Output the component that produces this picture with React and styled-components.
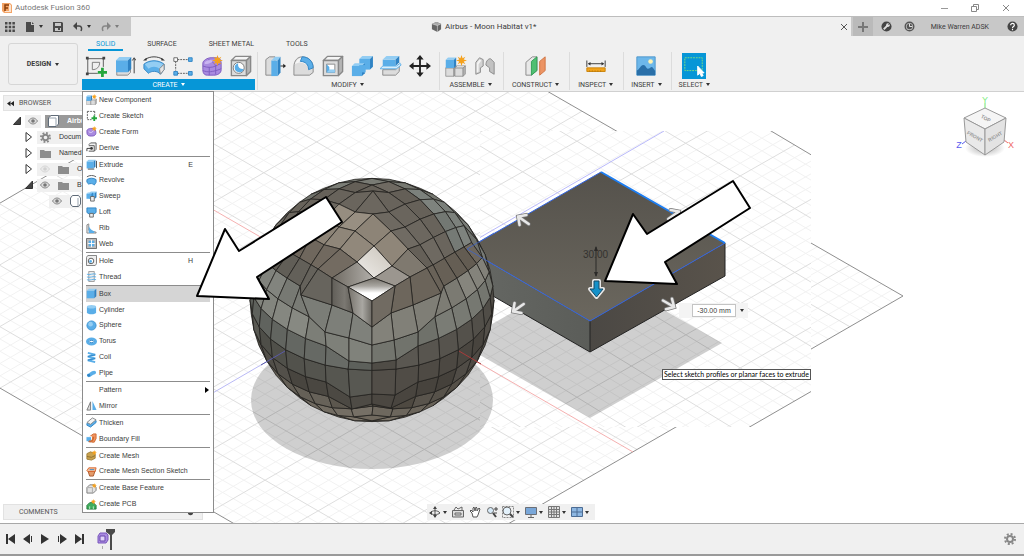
import React from 'react'
import styled, { createGlobalStyle, css } from 'styled-components'

const GlobalStyle = createGlobalStyle`
  * { box-sizing: border-box; }
  body {
    margin: 0;
    background: #fff;
    color: #3c3c3c;
    font: 7px/10px Roboto, sans-serif;
  }
  button, input {
    font: inherit;
    color: inherit;
    margin: 0;
    padding: 0;
    border: 0;
    background: none;
  }
  svg { display: block; flex: none; }
`

/* ---------- shell ---------- */

const Shell = styled.div`
  display: flex;
  flex-direction: column;
  min-height: 100vh;
`

const TitleBar = styled.header`
  display: flex;
  align-items: center;
  gap: 3px;
  height: 16px;
  padding: 0 14px 0 2px;
  color: #777;
  font-size: 8px;
`

const WindowButtons = styled.div`
  display: flex;
  gap: 23px;
  margin-left: auto;
`

const TabBar = styled.div`
  display: flex;
  height: 20px;
  background: #c8c8c8;
  border-top: 1px solid #bdbdbd;
`

const QuickAccess = styled.div`
  display: flex;
  align-items: center;
  width: 131px;
  padding-left: 5px;
  gap: 10px;
`

const QuickButton = styled.button`
  display: flex;
  align-items: center;
  gap: 4px;
  opacity: ${props => props.disabled ? 0.5 : 1};
`

const DocumentTab = styled.div`
  flex: 1;
  display: flex;
  align-items: center;
  justify-content: center;
  gap: 3px;
  padding-right: 3px;
  background: #f0f0f0;
  font-size: 8px;
  > button { margin-left: auto; }
  > svg { margin-left: auto; }
`

const AddTab = styled.button`
  display: grid;
  place-items: center;
  width: 20px;
  margin-left: 2px;
  background: #bababa;
`

const Account = styled.div`
  display: flex;
  align-items: center;
  gap: 12px;
  padding: 0 6px 0 8px;
  > span { margin: 0 6px 0 4px; }
`

const Caret = styled.span`
  display: inline-block;
  border: solid transparent;
  border-width: 3px 2px 0;
  border-top-color: ${props => props.$light ? '#fff' : '#333'};
`

/* ---------- toolbar ---------- */

const Toolbar = styled.div`
  display: flex;
  height: 56px;
  background: #f0f0f0;
  border-bottom: 1px solid #d0d0d0;
`

const DesignButton = styled.button`
  display: flex;
  align-items: center;
  justify-content: center;
  gap: 4px;
  width: 70px;
  height: 42px;
  margin: 7px 4px 0 8px;
  border: 1px solid #d6d6d6;
  border-radius: 3px;
  font-weight: 700;
`

const Ribbon = styled.div`
  display: flex;
  flex-direction: column;
`

const RibbonTabs = styled.div`
  display: flex;
  height: 16px;
  padding: 3px 0 0 6px;
  gap: 16px;
`

const RibbonTab = styled.button`
  height: 12px;
  padding: 0 8px;
  border-bottom: 2px solid transparent;
  ${props => props.$active && css`
    color: #0696d7;
    border-color: #0696d7;
  `}
`

const Groups = styled.div`
  display: flex;
`

const Group = styled.section`
  position: relative;
  display: flex;
  flex-direction: column;
  padding: 0 ${props => props.$pad}px;
  border-left: ${props => props.$first ? 0 : '1px solid #dcdcdc'};
  margin-left: ${props => props.$first ? 0 : 2}px;
`

const Tools = styled.div`
  display: flex;
  justify-content: center;
  gap: 5px;
  height: 27px;
  padding: 1px 2px 0;
  align-items: center;
`

const Tool = styled.button`
  width: 24px;
  height: 26px;
  display: grid;
  place-items: center;
  background: ${props => props.$active ? '#0696d7' : 'none'};
`

const GroupLabel = styled.button`
  display: flex;
  align-items: center;
  justify-content: center;
  gap: 3px;
  height: 11px;
  white-space: nowrap;
  color: ${props => props.$open ? '#fff' : '#3c3c3c'};
  background: ${props => props.$open ? '#0696d7' : 'none'};
`

/* ---------- create menu ---------- */

const Menu = styled.div`
  position: absolute;
  z-index: 2;
  top: 39px;
  left: 0;
  width: 132px;
  height: 422px;
  display: flex;
  flex-direction: column;
  padding: 0 3px;
  background: #fff;
  border: 1px solid #8c8c8c;
  font-family: 'Liberation Sans', Arial, sans-serif;
`

const MenuItem = styled.button`
  flex: 1;
  min-height: 0;
  display: flex;
  align-items: center;
  gap: 2px;
  text-align: left;
  background: ${props => props.$hot ? '#d5d5d5' : 'none'};
  > svg, > i { width: 11px; height: 11px; }
  > kbd { margin: 0 17px 0 auto; font: inherit; }
`

const Submenu = styled.b`
  margin: 0 1px 0 auto;
  border: solid transparent;
  border-width: 3px 0 3px 4px;
  border-left-color: #000;
`

const MenuRule = styled.hr`
  flex: none;
  width: 100%;
  height: 1px;
  margin: 0;
  border: 0;
  background: #8c8c8c;
`

/* ---------- viewport ---------- */

const Viewport = styled.main`
  position: relative;
  flex: 1;
  display: flex;
  overflow: hidden;
`

const Canvas = styled.svg`
  position: absolute;
  inset: 0;
  width: 100%;
  height: 100%;
  z-index: ${props => props.$top ? 3 : 'auto'};
  pointer-events: none;
`

const Side = styled.aside`
  position: relative;
  display: flex;
  flex-direction: column;
  justify-content: space-between;
  width: 200px;
  margin: 3px;
`

const PanelHead = styled.div`
  display: flex;
  align-items: center;
  gap: 5px;
  height: 16px;
  padding: 0 8px 0 3px;
  color: #555;
  background: #f0f0f0;
  border: 1px solid #e2e2e2;
`

const CommentsHead = styled(PanelHead)`
  justify-content: space-between;
  padding-left: 15px;
`

const Tree = styled.ul`
  list-style: none;
  margin: 2px 0 0;
  padding: 0;
  font-family: 'Liberation Sans', Arial, sans-serif;
`

const TreeRow = styled.li`
  display: flex;
  align-items: center;
  gap: 4px;
  height: 16px;
  padding-left: ${props => 10 + props.$level * 12}px;
`

const TreeLabel = styled.span`
  display: flex;
  align-items: center;
  gap: 8px;
  height: 13px;
  padding: 0 3px;
  background: ${props => props.$root ? '#999' : '#f0f0f0'};
  color: ${props => props.$root ? '#fff' : '#333'};
  font-weight: ${props => props.$root ? 700 : 400};
`

const NavBar = styled.nav`
  position: absolute;
  left: 427px;
  bottom: 3px;
  display: flex;
  align-items: center;
  justify-content: space-between;
  width: 168px;
  height: 16px;
  padding: 0 6px 0 2px;
  background: #f0f0f0;
`

const NavButton = styled.button`
  display: flex;
  align-items: center;
  gap: 2px;
`

const Distance = styled.label`
  position: absolute;
  left: 679px;
  top: 211px;
  display: flex;
  align-items: center;
  gap: 4px;
  height: 15px;
  padding: 0 4px 0 13px;
  background: #f4f4f4;
  font-family: 'Liberation Sans', Arial, sans-serif;
  > input {
    width: 44px;
    height: 13px;
    text-align: center;
    background: #fff;
    border: 1px solid #c4c4c4;
  }
`

const Hint = styled.div`
  position: absolute;
  left: 662px;
  top: 277px;
  padding: 0 1px;
  line-height: 9px;
  white-space: nowrap;
  color: #000;
  background: #fff;
  border: 1px solid #555;
  font-family: Lato, sans-serif;
`

const ViewCube = styled.svg`
  position: absolute;
  top: 2px;
  right: 6px;
`

const Timeline = styled.footer`
  display: flex;
  align-items: center;
  gap: 7px;
  height: 33px;
  padding: 0 8px 0 6px;
  background: #f0f0f0;
  border-top: 1px solid #a8a8a8;
  border-bottom: 2px solid #9a9a9a;
  > button:last-child { margin-left: auto; }
`

const History = styled.div`
  display: flex;
  align-items: flex-start;
  margin-left: 6px;
`

/* ---------- icon parts ---------- */

const BLUE = '#5aaee8'
const BLUE_DARK = '#2f83c4'
const BLUE_LIGHT = '#93cdf3'

const Svg = ({ size = 22, box = 24, children, ...props }) => (
  <svg width={size} height={size} viewBox={`0 0 ${box} ${box}`} fill="none" aria-hidden="true" {...props}>
    {children}
  </svg>
)

const Spark = ({ x, y, r }) => (
  <g transform={`translate(${x} ${y}) scale(${r / 10})`}>
    <path fill="#f5a11c" d="M0-10 2-4 7-7 4-2 10 0 4 2 7 7 2 4 0 10-2 4-7 7-4 2-10 0-4-2-7-7-2-4Z" />
  </g>
)

const Cube = ({ x = 0, y = 0, s = 16, top = BLUE_LIGHT, front = BLUE, side = BLUE_DARK, line = 'none' }) => (
  <g transform={`translate(${x} ${y}) scale(${s / 16})`} stroke={line} strokeLinejoin="round">
    <path fill={top} d="M1 4 4 1H15L12 4Z" />
    <path fill={front} d="M1 4H12V15H1Z" />
    <path fill={side} d="M12 4 15 1V12L12 15Z" />
  </g>
)

const GREY = { top: '#f5f5f5', front: '#dcdcdc', side: '#b5b5b5', line: '#888' }

/* ---------- toolbar icons ---------- */

const toolIcons = {
  sketch: (
    <Svg>
      <path stroke="#555" d="M3 4H20M3 4V20M3 20H14M20 4V13" />
      <path fill="#444" d="M1 2h3v3H1zM19 2h3v3h-3zM1 19h3v3H1z" />
      <path stroke="#777" d="M8 16V8H16C16 13 13 16 8 16Z" />
      <path stroke="#24a63c" strokeWidth="3" d="M19 14V24M14 19H24" />
    </Svg>
  ),
  extrude: (
    <Svg>
      <path fill={GREY.front} stroke="#888" d="M3 17H15L18 14V19L15 22H3Z" />
      <Cube x={1} y={1} s={19} />
      <path stroke="#333" d="M22 20V4M20 6l2-3 2 3" />
    </Svg>
  ),
  revolve: (
    <Svg>
      <path fill={BLUE} stroke={BLUE_DARK} d="M1 10C7 5 17 5 23 10V16L19 21C16 17 9 17 6 20L1 15Z" />
      <path fill={BLUE_LIGHT} d="M2 10C8 6 16 6 22 10L18 15C15 12 9 12 6 15Z" />
      <path fill="#e5e5e5" stroke="#888" d="M18 15 23 10V16L19 21Z" />
      <path stroke="#333" d="M2 5C8 1 16 1 22 5" />
      <path fill="#333" d="M0 6l4-3v3zM24 6l-4-3v3z" />
    </Svg>
  ),
  pattern: (
    <Svg>
      <path stroke="#555" strokeDasharray="2 1" d="M6 5H18M4 7V17M6 20H18" />
      <path fill="#fff" stroke="#666" d="M2 3h4v4H2z" />
      <path fill={BLUE} stroke={BLUE_DARK} d="M18 3h4v4h-4zM2 18h4v4H2zM18 18h4v4h-4z" />
    </Svg>
  ),
  form: (
    <Svg>
      <path fill="#a98be0" stroke="#7b57bd" d="M2 9C2 6 7 3 11 3H17C21 3 22 6 22 10V16C22 20 18 22 14 22H7C3 22 2 19 2 16Z" />
      <path stroke="#7d5cc0" d="M2 12C7 14 12 14 16 12L22 9M9 13V22M2 17C7 19 12 19 22 15M16 12V21M8 5C12 7 13 7 16 12" />
      <path fill="#c9b4f0" d="M4 8C7 5 11 5 13 6 12 9 7 10 4 10Z" />
      <Spark x={18} y={6} r={6} />
    </Svg>
  ),
  hole: (
    <Svg>
      <Cube x={0} y={0} s={24} {...GREY} />
      <circle cx="9.500" cy="14" r="6" fill="#fff" stroke="#777" />
      <path fill={BLUE} d="M9 9A5 5 0 1 0 15 15C11 16 8 13 9 9Z" />
    </Svg>
  ),
  press: (
    <Svg>
      <path fill={GREY.front} stroke="#888" d="M2 5 6 2H12V22H2Z" />
      <path fill={BLUE} d="M8 6H15V23H8Z" />
      <path fill={BLUE_LIGHT} d="M8 6 12 2H18L15 6Z" />
      <path fill={BLUE_DARK} d="M15 6 18 2V19L15 23Z" />
      <path stroke="#222" d="M18 12H22" /><path fill="#222" d="M21 9.500 24 12 21 14.500Z" />
    </Svg>
  ),
  fillet: (
    <Svg>
      <path fill="#dcdcdc" stroke="#888" d="M1 13C1 6 5 2 10 2 17 2 22 7 22 14V19L18 22H1Z" />
      <path fill="#f5f5f5" d="M2 10C4 5 7 3 10 3 14 3 17 6 19 10L17 14C14 9 9 6 2 10Z" />
      <path fill={BLUE} stroke={BLUE_DARK} d="M10 2C17 2 22 7 22 14L17 16C17 11 14 7 8 7Z" />
    </Svg>
  ),
  shell: (
    <Svg>
      <Cube x={0} y={0} s={24} {...GREY} />
      <path fill="#fff" stroke="#888" d="M5 10H14V19H5Z" />
      <path fill={BLUE} d="M5 10 8 13V16H14V19H5Z" />
      <path fill={BLUE_LIGHT} d="M8 16H14V19H5Z" />
    </Svg>
  ),
  combine: (
    <Svg>
      <Cube x={8} y={0} s={17} />
      <Cube x={0} y={8} s={16} />
      <path fill={BLUE} d="M9 11h7v8H9z" />
    </Svg>
  ),
  split: (
    <Svg>
      <path fill="#dcdcdc" stroke="#888" d="M3 16H17L21 12V18L17 22H3Z" />
      <path fill={BLUE} d="M3 5H17V12H3Z" />
      <path fill={BLUE_LIGHT} d="M3 5 7 1H21L17 5Z" />
      <path fill={BLUE_DARK} d="M17 5 21 1V8L17 12Z" />
      <path fill="#d7eefc" stroke={BLUE} d="M0 15 3 12H18L22 9 23 11 18 15H0Z" />
    </Svg>
  ),
  move: (
    <Svg>
      <path stroke="#222" strokeWidth="2" d="M12 4V20M4 12H20" />
      <path fill="#222" d="M12 0 16 5H8ZM12 24 8 19H16ZM0 12 5 8V16ZM24 12 19 16V8Z" />
    </Svg>
  ),
  component: (
    <Svg>
      <Cube x={0} y={11} s={13} {...GREY} />
      <Cube x={10} y={11} s={13} {...GREY} />
      <Cube x={0} y={2} s={13} />
      <Spark x={18} y={6} r={6} />
    </Svg>
  ),
  joint: (
    <Svg>
      <path fill="#d2d2d2" stroke="#888" d="M2 8 6 3 10 5V12L7 14V19L2 21Z" />
      <path fill="#c2c2c2" stroke="#888" d="M22 21 17 18V14L13 11C13 6 16 4 18 4L22 8Z" />
      <path fill="#f3f3f3" d="M3 9 6 5 8 6 5 10V18L3 19Z" />
    </Svg>
  ),
  plane: (
    <Svg>
      <path fill="#e8e8e8" stroke="#888" d="M1 8 8 2H13V17L7 22H1Z" />
      <path fill="#4fbf72" stroke="#2e9c52" d="M7 7 13 2V17L7 22Z" />
      <path fill="#ec9464" stroke="#cf7443" d="M16 7 22 2V17L16 22Z" />
    </Svg>
  ),
  measure: (
    <Svg>
      <path fill="#f2a31b" stroke="#c98209" d="M2 14h20v4H2z" />
      <path stroke="#a86c05" d="M5 17v1M8 17v1M11 17v1M14 17v1M17 17v1" />
      <path stroke="#333" d="M2 6V13M22 6V13M4 9.500H20" />
      <path fill="#333" d="M3 9.500 6 7.500V11.500ZM21 9.500 18 7.500V11.500Z" />
    </Svg>
  ),
  image: (
    <Svg>
      <path fill="#6db7ea" stroke="#4b96cc" d="M2 2H22V22H2Z" />
      <circle cx="17" cy="7" r="2.500" fill="#fff3b4" />
      <path fill="#296fa8" d="M2 17C5 16 6 11 9 11 12 11 12 15 14 15 16 15 17 13 18 13 20 13 21 17 22 17V22H2Z" />
    </Svg>
  ),
  select: (
    <Svg>
      <path stroke="#7fe07f" strokeDasharray="2 1" d="M2 3H21V17H2Z" />
      <path fill="#fff" stroke="#fff" d="M16 12V22L18.500 20 20 23.500 22 22.500 20.500 19.500H23Z" />
    </Svg>
  )
}

/* ---------- menu icons, on a 12 unit box ---------- */

const Mini = ({ children }) => <Svg size={11} box={12}>{children}</Svg>

const menuIcons = {
  component: <Mini><Cube x={0} y={5} s={7} {...GREY} /><Cube x={5} y={5} s={7} {...GREY} /><Cube x={0} y={1} s={7} /><Spark x={9} y={3} r={3} /></Mini>,
  sketch: <Mini><path stroke="#555" strokeDasharray="2 1" d="M1.500 1.500H9.500M1.500 1.500V10.500H6M9.500 1.500V6" /><path stroke="#24a63c" strokeWidth="2" d="M9 6V12M6 9H12" /></Mini>,
  form: <Mini><path fill="#a98be0" stroke="#7b57bd" d="M1 5C2 2 8 2 10 4 12 9 10 11 6 11 1 11 1 9 1 5Z" /><path stroke="#e9ddff" d="M3 6C5 8 7 7 8 5" /><Spark x={9} y={3} r={3} /></Mini>,
  derive: <Mini><path fill="#f2f2f2" stroke="#555" d="M3 3 5 1H11V8L9 10H3" /><path stroke="#555" d="M3 4H9V10" /><circle cx="6" cy="7" r="1.500" fill="#333" /><path stroke="#333" d="M1 10V7H5" /></Mini>,
  extrude: <Mini><Cube s={11} /><path stroke="#444" d="M11.500 10V2M9 11H2" /></Mini>,
  revolve: <Mini><path fill={BLUE} stroke={BLUE_DARK} d="M1 5C4 3 8 3 11 5V8L9 11C8 9 4 9 3 10L1 8Z" /><path stroke="#555" d="M1 2C4 0 8 0 11 2" /></Mini>,
  sweep: <Mini><Cube x={3} y={0} s={9} /><Cube x={0} y={1} s={8} /><path fill="#eee" stroke="#666" d="M5 6h4v5H5z" /></Mini>,
  loft: <Mini><path fill={BLUE} stroke={BLUE_DARK} d="M1 1H11V6L8 8H4L1 6Z" /><path fill="#eee" stroke="#666" d="M4 7h4v4H4z" /></Mini>,
  rib: <Mini><path fill="#e4e4e4" stroke="#888" d="M1 11V2L3 1V8L11 10V11Z" /><path fill={BLUE} d="M3 3C4 6 6 8 9 9V11H3Z" /></Mini>,
  web: <Mini><path fill="#bbb" stroke="#666" d="M.5.5h11v11H.5z" /><path fill={BLUE} d="M3 3h6v6H3z" /><path stroke="#fff" d="M6 2V10M2 6H10" /></Mini>,
  hole: <Mini><path fill="#eee" stroke="#777" d="M.5 2.500 2 .5H11.500V9.500L10 11.500H.5Z" /><circle cx="5.500" cy="6.500" r="3" fill="#fff" stroke="#555" /><circle cx="5" cy="7" r="1.500" fill={BLUE} /></Mini>,
  thread: <Mini><path fill="#ececec" stroke="#999" d="M3 .5H9V11.500H3Z" /><path stroke={BLUE} d="M1 3.500C4 5 8 2 11 3.500M1 6.500C4 8 8 5 11 6.500M1 9.500C4 11 8 8 11 9.500" /></Mini>,
  box: <Mini><Cube s={12} /></Mini>,
  cylinder: <Mini><path fill={BLUE} d="M1 3V9C1 12 11 12 11 9V3Z" /><ellipse cx="6" cy="3" rx="5" ry="2" fill={BLUE_LIGHT} /></Mini>,
  sphere: <Mini><circle cx="6" cy="6" r="5" fill={BLUE} stroke="#4296d2" /><circle cx="5" cy="4.500" r="2.500" fill={BLUE_LIGHT} /></Mini>,
  torus: <Mini><ellipse cx="6" cy="6" rx="4.500" ry="2.800" stroke={BLUE} strokeWidth="3" /><ellipse cx="6" cy="6" rx="2.500" ry="1.200" stroke={BLUE_DARK} /></Mini>,
  coil: <Mini><path stroke={BLUE} strokeWidth="2" d="M2 1 10 3 2 5 10 7 2 9 10 11" /><path stroke={BLUE_DARK} d="M10 3 2 5M10 7 2 9" /></Mini>,
  pipe: <Mini><path stroke={BLUE} strokeWidth="4" strokeLinecap="round" d="M3 8C5 8 6 5 9 5" /><circle cx="3" cy="8" r="1.500" fill={BLUE_DARK} /></Mini>,
  mirror: <Mini><path fill="#ddd" stroke="#777" d="M1 11 5 2V11Z" /><path fill={BLUE} d="M7 1 11.500 11H7Z" /></Mini>,
  thicken: <Mini><path fill={BLUE} stroke={BLUE_DARK} d="M1 7 7 2 11 4V6L5 11 1 9Z" /><path fill="#f2f2f2" stroke="#888" d="M1 6 7 1 11 3 5 8Z" /></Mini>,
  boundary: <Mini><path fill="#f0935f" stroke="#cf6a31" d="M4 4 8 1H11V6L9 10H4Z" /><path fill={BLUE} stroke="#fff" d="M0 4H6V10C4 11 1 10 0 8Z" /><path stroke="#cf6a31" strokeWidth="2" d="M3 9C6 10 8 8 8 4" /></Mini>,
  mesh: <Mini><path fill="#c9a24e" stroke="#a07f38" d="M1 4 5 2 10 4V9L6 11 1 10Z" /><path stroke="#8d6f2e" d="M1 7 6 8 10 6" /><Spark x={9} y={3} r={3} /></Mini>,
  meshSection: <Mini><path fill="#e39b6a" stroke="#a8572a" d="M2 5 10 5 8 11H4Z" /><path fill="#f7c39e" stroke="#d4622b" d="M1 5 3 2H11L10 6H2Z" /><path stroke={BLUE_DARK} d="M4 4H9" /></Mini>,
  base: <Mini><path fill="#e2e2e2" stroke="#777" d="M1 5 4 2H9L11 5V8L8 11H1Z" /><path stroke="#aaa" d="M2 5H7V11" /><Spark x={9} y={3} r={3} /></Mini>,
  pcb: <Mini><path fill="#3fae5c" stroke="#237a3c" d="M1 7 4 4H8L11 7V11H1Z" /><path stroke="#bff0ca" d="M4 8V11M8 8V11" /><Spark x={8} y={3} r={3} /></Mini>
}

const menuGroups = [
  [['New Component', 'component'], ['Create Sketch', 'sketch'], ['Create Form', 'form'], ['Derive', 'derive']],
  [['Extrude', 'extrude', 'E'], ['Revolve', 'revolve'], ['Sweep', 'sweep'], ['Loft', 'loft'], ['Rib', 'rib'], ['Web', 'web']],
  [['Hole', 'hole', 'H'], ['Thread', 'thread']],
  [['Box', 'box'], ['Cylinder', 'cylinder'], ['Sphere', 'sphere'], ['Torus', 'torus'], ['Coil', 'coil'], ['Pipe', 'pipe']],
  [['Pattern', null], ['Mirror', 'mirror']],
  [['Thicken', 'thicken'], ['Boundary Fill', 'boundary']],
  [['Create Mesh', 'mesh'], ['Create Mesh Section Sketch', 'meshSection']],
  [['Create Base Feature', 'base'], ['Create PCB', 'pcb']]
]

const CreateMenu = () => (
  <Menu role="menu" aria-label="Create">
    {menuGroups.map((items, g) => (
      <React.Fragment key={g}>
        {g > 0 && <MenuRule />}
        {items.map(([label, icon, key]) => (
          <MenuItem key={label} role="menuitem" $hot={label === 'Box'}>
            {icon ? menuIcons[icon] : <i />}
            {label}
            {key && <kbd>{key}</kbd>}
            {!icon && <Submenu />}
          </MenuItem>
        ))}
      </React.Fragment>
    ))}
  </Menu>
)

const toolGroups = [
  { label: 'CREATE', tools: ['sketch', 'extrude', 'revolve', 'pattern', 'form', 'hole'], pad: 0, open: true },
  { label: 'MODIFY', tools: ['press', 'fillet', 'shell', 'combine', 'split', 'move'], pad: 3 },
  { label: 'ASSEMBLE', tools: ['component', 'joint'], pad: 2 },
  { label: 'CONSTRUCT', tools: ['plane'], pad: 8 },
  { label: 'INSPECT', tools: ['measure'], pad: 8 },
  { label: 'INSERT', tools: ['image'], pad: 7 },
  { label: 'SELECT', tools: ['select'], pad: 7 }
]

/* ---------- tree and navigation icons ---------- */

const Eye = ({ dim }) => (
  <svg width="10" height="8" viewBox="0 0 10 8" fill="none" opacity={dim ? 0.25 : 1}>
    <path fill="#ddd" stroke="#888" d="M.5 4C3 0 7 0 9.500 4 7 8 3 8 .5 4Z" />
    <circle cx="5" cy="4" r="1.800" fill="#777" />
  </svg>
)

const Folder = () => (
  <svg width="11" height="9" viewBox="0 0 11 9"><path fill="#8d8d8d" d="M0 1H4L5 2H11V9H0Z" /></svg>
)

const Gear = ({ size = 11 }) => (
  <Svg size={size} box={12} stroke="#888">
    <circle cx="6" cy="6" r="3" strokeWidth="2" />
    <circle cx="6" cy="6" r="5" strokeWidth="2" strokeDasharray="2 1.930" />
  </Svg>
)

const Body = ({ plain }) => (
  <svg width="11" height="12" viewBox="0 0 11 12" fill="none">
    <path fill="#fff" stroke="#5f6b78" d={plain ? 'M.5 3 3 .5H10.500V9L8 11.500H.5Z' : 'M2.500.5H8.500L10.500 3V9L8.500 11.500H2.500L.5 9V3Z'} />
    <path stroke="#9aa5b0" d={plain ? 'M1 3H8V11' : 'M8 3V11'} />
  </svg>
)

const Twist = ({ open }) => (
  <svg width="8" height="10" viewBox="0 0 8 10">
    {open
      ? <path fill="#444" stroke="#333" d="M7.500 1V8.500H.5Z" />
      : <path fill="#fff" stroke="#333" d="M1 .5 6.500 5 1 9.500Z" />}
  </svg>
)

const tree = [
  { id: 'root', level: 0, open: true, eye: 'on', icon: 'body', text: 'Airbus', root: true },
  { id: 'settings', level: 1, icon: 'gear', text: 'Docum' },
  { id: 'views', level: 1, icon: 'folder', text: 'Named' },
  { id: 'origin', level: 1, eye: 'off', icon: 'folder', text: 'O' },
  { id: 'bodies', level: 1, open: true, eye: 'on', icon: 'folder', text: 'B' },
  { id: 'body', level: 3, leaf: true, eye: 'on', icon: 'solid' }
]

const treeIcons = { body: <Body plain />, solid: <Body />, gear: <Gear />, folder: <Folder /> }

const navIcons = [
  ['Orbit', true, <><path stroke="#555" d="M6 1V11M1 7C3 4 9 4 11 7 9 9 3 9 1 7" /><path fill="#444" d="M6 0 8 3H4ZM6 12 4 9H8ZM0 7 3 5V9Z" /></>],
  ['Look At', false, <><path fill="#ddd" stroke="#666" d="M.5 4.500H11.500V11H.5Z" /><path stroke="#666" d="M2 4 4 1 6 3 10 1V4M3 7H9V9H3Z" /></>],
  ['Pan', false, <path fill="#fff" stroke="#555" d="M3 7 1 5 2 4 4 6V2L5 1 6 5 7 1 8 2V5L10 2 11 3 9 9 8 11H4Z" />],
  ['Zoom', false, <><circle cx="4.500" cy="4.500" r="3" fill="#d7eaf8" stroke="#666" /><path stroke="#444" strokeWidth="2" d="M7 7 10 11" /><path stroke="#444" d="M10 1V5M8 3H12M8 7H11" /></>],
  ['Fit', true, <><path stroke="#888" strokeDasharray="2 1" d="M.5.5H11.500V11.500H.5Z" /><circle cx="5" cy="5" r="4" fill="#e3f1fb" stroke="#666" /><path stroke="#444" strokeWidth="2" d="M8 8 11 11" /></>],
  ['Display Settings', true, <><path fill="#79a7d9" stroke="#6b6f77" d="M.5 1.500H11.500V8.500H.5Z" /><path stroke="#666" d="M6 9V11M3 11.500H9" /></>],
  ['Grid and Snaps', true, <path fill="#e2e2e2" stroke="#777" d="M.5.5H11.500V11.500H.5ZM3.500 0V12M6 0V12M8.500 0V12M0 3.500H12M0 6H12M0 8.500H12" />],
  ['Viewports', true, <path fill="#8db7e2" stroke="#4c6c94" d="M.5 1.500H11.500V10.500H.5ZM6 1V11M0 6H12" />]
]

/* ---------- 3d scene ---------- */

const lerp = (a, b, t) => [a[0] + (b[0] - a[0]) * t, a[1] + (b[1] - a[1]) * t]
const seg = (a, b) => `M${a[0].toFixed(1)} ${a[1].toFixed(1)}L${b[0].toFixed(1)} ${b[1].toFixed(1)}`

const Grid = ({ left, top, right, bottom }) => {
  let minor = ''
  let major = ''
  for (let i = 1; i < 50; i++) {
    const t = i / 50
    const d = seg(lerp(left, top, t), lerp(bottom, right, t)) + seg(lerp(left, bottom, t), lerp(top, right, t))
    if (i % 5) minor += d
    else major += d
  }
  return (
    <g fill="none">
      <path d={minor} stroke="#f2f2f2" />
      <path d={major} stroke="#dedede" />
      <path d={`M${left}L${top}L${right}L${bottom}Z`} stroke="#8f8f8f" />
    </g>
  )
}

const STEPS = 8
const CENTER = [372, 300]
const RADIUS = 122

// vertices moved off the sphere, keyed by steps from the near corner along x, y, z
const pulled = {
  '0,0,0': [372, 301], '1,0,0': [348, 287], '0,0,1': [395, 286], '1,0,1': [374, 278],
  '0,1,0': [372, 327], '1,1,0': [353, 313], '0,1,1': [391, 313],
  '2,0,0': [332, 278], '0,0,2': [410, 277], '2,0,1': [357, 262], '1,0,2': [392, 266], '2,0,2': [374, 246],
  '2,1,0': [332, 305], '0,1,2': [413, 305],
  '0,2,0': [372, 345], '1,2,0': [349, 338], '0,2,1': [394, 340], '2,2,0': [325, 332], '0,2,2': [418, 332],
  '0,3,0': [372, 363], '1,3,0': [349, 361], '0,3,1': [396, 360],
  '3,0,0': [318, 269], '0,0,3': [427, 268], '3,0,1': [340, 249], '1,0,3': [408, 249],
  '3,0,2': [355, 231], '2,0,3': [391, 231], '3,0,3': [373, 214],
  '4,0,4': [373, 191], '3,1,0': [301, 295], '0,1,3': [441, 293],
  '0,6,0': [372, 404], '1,6,0': [352, 409], '0,6,1': [391, 408],
  '0,7,0': [373, 406], '0,5,0': [372, 394], '1,5,0': [350, 397], '0,5,1': [395, 395]
}

const project = (x, y, z) => {
  const t = [x, y, z].map(n => Math.tan(Math.PI / 4 - n * Math.PI / 2 / STEPS))
  const len = Math.hypot(...t)
  const [a, b, c] = t.map(n => n / len)
  const fixed = pulled[`${x},${y},${z}`]
  const px = CENTER[0] + RADIUS * (a - c) / Math.SQRT2
  const py = CENTER[1] - RADIUS * (2 * b - a - c) / Math.sqrt(6)
  return { p: fixed || [px, py], depth: a + b + c }
}

const faces = {
  top: (i, j) => [i, 0, j],
  left: (i, j) => [i, j, 0],
  right: (i, j) => [0, j, i],
  under: (i, j) => [i, STEPS, j],
  backLeft: (i, j) => [STEPS, j, i],
  backRight: (i, j) => [i, j, STEPS]
}

const tones = {
  left: [[100, 97, 90], [124, 126, 120], [129, 131, 124], [98, 101, 96], [84, 84, 78], [78, 75, 69], [98, 93, 84], [113, 107, 97]],
  right: [[104, 97, 87], [128, 127, 119], [116, 118, 111], [84, 81, 75], [78, 74, 68], [75, 71, 65], [84, 79, 71], [105, 99, 89]],
  under: [[118, 111, 100]],
  backLeft: [[110, 107, 99]],
  backRight: [[116, 119, 114]]
}

const special = {
  'top,0,0': 'url(#tip)', 'top,1,1': 'url(#shine)', 'top,1,0': 'url(#wing)', 'top,0,1': '#9b968f',
  'left,0,0': 'url(#cheek)', 'right,0,0': '#716b62', 'left,1,0': 'url(#fold)'
}

const shade = (face, i, j) => {
  const key = `${face},${i},${j}`
  if (special[key]) return special[key]
  let tone
  if (face === 'top') {
    if (i + j > 9) tone = [118, 120, 113]
    else if (j === 0) tone = [112, 104, 94]
    else if (j < 3 && i < 5) tone = i === 0 ? [128, 122, 112] : [146, 137, 124]
    else if (j > 5) tone = [121, 126, 121]
    else tone = [106, 101, 93]
  } else {
    const rows = tones[face]
    tone = rows[j % rows.length]
  }
  const noise = ((i * 37 + j * 61 + face.length * 13) % 13) - 6
  return `rgb(${tone.map(n => n + noise).join(',')})`
}

const quads = []
Object.entries(faces).forEach(([face, at]) => {
  for (let i = 0; i < STEPS; i++) {
    for (let j = 0; j < STEPS; j++) {
      const corners = [at(i, j), at(i + 1, j), at(i + 1, j + 1), at(i, j + 1)].map(c => project(...c))
      const depth = corners.reduce((sum, c) => sum + c.depth, 0) / 4
      if (depth > 0) {
        quads.push({
          key: `${face}${i}${j}`,
          depth,
          fill: shade(face, i, j),
          points: corners.map(c => c.p.map(n => n.toFixed(1)).join()).join(' ')
        })
      }
    }
  }
})
quads.sort((a, b) => a.depth - b.depth)

const Sphere = () => (
  <g stroke="#23221f" strokeWidth="0.800" strokeLinejoin="round">
    <circle cx="372" cy="300" r="121" fill="#6f6b62" />
    {quads.map(q => <polygon key={q.key} points={q.points} fill={q.fill} />)}
  </g>
)

const Handle = ({ x, y, angle }) => (
  <g transform={`translate(${x} ${y}) rotate(${angle})`} fill="none" strokeLinecap="round">
    <path stroke="#777" strokeWidth="4" d="M-7 0H5M0-6 6 0 0 6" />
    <path stroke="#e8e8e8" strokeWidth="2.500" d="M-7 0H5M0-6 6 0 0 6" />
  </g>
)

const Scene = () => (
  <Canvas viewBox="0 92 1024 431" preserveAspectRatio="xMinYMin slice" aria-label="Model">
    <defs>
      <linearGradient id="topFace" x1="0" y1="0" x2="0" y2="1"><stop stopColor="#55524c" /><stop offset="1" stopColor="#6b675e" /></linearGradient>
      <linearGradient id="sideFace"><stop stopColor="#666864" /><stop offset="1" stopColor="#5b5d59" /></linearGradient>
      <linearGradient id="endFace"><stop stopColor="#4b4844" /><stop offset="1" stopColor="#59534b" /></linearGradient>
      <linearGradient id="tip" x1="0" y1="0" x2="0" y2="1"><stop stopColor="#77736c" /><stop offset=".35" stopColor="#a9a6a1" /><stop offset=".65" stopColor="#fff" /></linearGradient>
      <linearGradient id="shine" x1="1" y1="0" x2="0" y2="1"><stop stopColor="#c9c3b9" /><stop offset="1" stopColor="#efedea" /></linearGradient>
      <linearGradient id="wing"><stop stopColor="#6f6a62" /><stop offset="1" stopColor="#b3b0ab" /></linearGradient>
      <linearGradient id="cheek"><stop stopColor="#75716a" /><stop offset=".6" stopColor="#a9a7a2" /><stop offset="1" stopColor="#6c6963" /></linearGradient>
      <linearGradient id="fold"><stop stopColor="#615e58" /><stop offset=".6" stopColor="#7b7872" /><stop offset="1" stopColor="#5d5a54" /></linearGradient>
      <clipPath id="inset"><path d="M480 131H811V427H480Z" /></clipPath>
    </defs>
    <Grid left={[-159, 296]} top={[368, -12]} right={[903, 296]} bottom={[371, 603]} />
    <g clipPath="url(#inset)">
      <path fill="#fff" d="M480 131H811V427H480Z" />
      <Grid left={[-73, 250]} top={[467, -50]} right={[1013, 275]} bottom={[467, 590]} />
      <path stroke="#b9b9fb" d="M467 245 664 131" />
      <path fill="#000" opacity=".19" d="M459 343 590 268 722 343 590 418Z" />
    </g>
    <path stroke="#f5b0b0" d="M82 134 633 452" />
    <path stroke="#b9b9f5" d="M82 469 285 351" />
    <ellipse cx="372" cy="400" rx="121" ry="69" fill="#000" opacity=".19" />

    <path fill="url(#topFace)" d="M467 249 601 172 725 243 590 321Z" />
    <path fill="url(#sideFace)" d="M467 249 590 321V352L467 281Z" />
    <path fill="url(#endFace)" d="M590 321 725 243V276L590 352Z" />
    <path fill="none" stroke="#222" d="M467 281 590 352 725 276V243M590 321V352" />
    <path fill="none" stroke="#2f62e0" d="M725 243 590 321 467 249 601 172" />
    <path stroke="#1c7df2" strokeWidth="2" d="M601 172 725 243" />

    <Sphere />
    <path fill="none" stroke="#3d63c8" strokeWidth=".800" d="M494 265 467 249 494 233" />
    <path stroke="#5a5aa8" d="M261 365 285 351" />
    <path stroke="#a83a3a" d="M459 351 481 364" />

    <Handle x={523} y={220} angle={-145} />
    <Handle x={674} y={215} angle={-35} />
    <Handle x={518} y={308} angle={145} />
    <Handle x={669} y={304} angle={30} />
    <path stroke="#2b2a28" d="M596 247V276" />
    <path fill="#2b2a28" d="M596 246l2 5h-4zM596 277l2-5h-4z" />
    <text x="583" y="258" fill="#33322f" fontSize="10" fontFamily="Liberation Sans, Arial, sans-serif">30.00</text>
    <path fill="#1591c9" stroke="#e8e8e8" strokeWidth="4" strokeLinejoin="round" d="M594 281h5v8h4l-6.500 8-6.500-8h4z" />
    <path fill="#1591c9" stroke="#174b66" d="M594 281h5v8h4l-6.500 8-6.500-8h4z" />
  </Canvas>
)

const Callouts = () => (
  <Canvas $top viewBox="0 92 1024 431" preserveAspectRatio="xMinYMin slice" aria-hidden="true">
    <g fill="#fff" stroke="#000" strokeWidth="2" strokeLinejoin="round">
      <path d="M326 197 342 222 257 277 269 299 197 296 225 229 239 251Z" />
      <path d="M733 181 750 208 665 262 677 284 605 281 633 214 647 234Z" />
    </g>
  </Canvas>
)

const Cube3d = () => (
  <ViewCube width="64" height="66" viewBox="0 0 64 66" aria-label="View cube">
    <defs>
      <radialGradient id="ground"><stop stopColor="#888" stopOpacity=".7" /><stop offset="1" stopColor="#888" stopOpacity="0" /></radialGradient>
    </defs>
    <ellipse cx="31" cy="54" rx="20" ry="9" fill="url(#ground)" />
    <path stroke="#6fe66f" d="M31 9V14" />
    <path stroke="#5a5aee" d="M8 50 12 47" />
    <path stroke="#f06a6a" d="M50 46 54 49" />
    <g stroke="#999" strokeLinejoin="round">
      <path fill="#f5f5f5" d="M31 14 52 24 31 35 10 24Z" />
      <path fill="#e9e9e9" d="M10 24 31 35V61L12 48Z" />
      <path fill="#e3e3e3" d="M52 24 31 35V61L50 48Z" />
    </g>
    <g fontFamily="Liberation Sans, Arial, sans-serif" textAnchor="middle" fontSize="5" fontWeight="700" fill="#999">
      <text transform="translate(31 26) rotate(28)">TOP</text>
      <text transform="translate(20 44) rotate(30)">FRONT</text>
      <text transform="translate(42 44) rotate(-30)">RIGHT</text>
    </g>
    <g fontFamily="Liberation Sans, Arial, sans-serif" textAnchor="middle" fontSize="9">
      <text x="31" y="9" fill="#7fee7f">Y</text>
      <text x="5" y="54" fill="#5a5aee">Z</text>
      <text x="57" y="54" fill="#f06a6a">X</text>
    </g>
  </ViewCube>
)

/* ---------- small bar icons ---------- */

const bars = {
  apps: <Svg size={10} box={10}><path fill="#4a4a4a" d="M0 0h2.500v2.500H0zM3.700 0h2.500v2.500H3.700zM7.400 0h2.500v2.500H7.400zM0 3.700h2.500v2.500H0zM3.700 3.700h2.500v2.500H3.700zM7.400 3.700h2.500v2.500H7.400zM0 7.400h2.500v2.500H0zM3.700 7.400h2.500v2.500H3.700zM7.400 7.400h2.500v2.500H7.400z" /></Svg>,
  file: <Svg size={10} box={10}><path fill="#4a4a4a" d="M1 0H6V3H9V10H1ZM7 0 9 2H7Z" /></Svg>,
  save: <Svg size={10} box={10}><path fill="#4a4a4a" fillRule="evenodd" d="M0 0H9L10 1V10H0ZM2 1V4H8V1ZM2 6V9H8V6ZM5 6H7V8H5Z" /></Svg>,
  undo: <Svg size={10} box={10}><path stroke="#444" strokeWidth="1.500" d="M2 4H6C9 4 9 7 8 9" /><path fill="#444" d="M0 4 4 0V8Z" /></Svg>,
  redo: <Svg size={10} box={10}><path stroke="#444" strokeWidth="1.500" d="M8 4H4C1 4 1 7 2 9" /><path fill="#444" d="M10 4 6 0V8Z" /></Svg>,
  doc: <Svg size={11} box={12}><path fill="#666" d="M1 3 6 1 11 3V9L7 12 1 9Z" /><path fill="#aaa" d="M1 3 6 1 11 3 7 5Z" /><path stroke="#fff" strokeWidth=".500" d="M1 3 7 5 11 3M7 5V12" /></Svg>
}

const playback = [
  ['Start', 'M0 0H2V10H0ZM9 0V10L2 5Z'],
  ['Step back', 'M7 0V10L0 5ZM8 2H9V8H8Z'],
  ['Play', 'M1 0 9 5 1 10Z'],
  ['Step forward', 'M3 0V10L10 5ZM1 2H2V8H1Z'],
  ['End', 'M1 0V10L8 5ZM8 0H10V10H8Z']
]

const App = () => (
  <Shell>
    <GlobalStyle />
    <TitleBar>
      <Svg size={10} box={10}>
        <path fill="#f3a467" d="M0 0H8L10 2V10H2L0 8Z" />
        <path fill="#fbe3cf" d="M7 1 9 2V9H3V8H7Z" />
        <path stroke="#8a3f0c" strokeWidth="1.500" d="M3 8V2H7M3 5H6" />
      </Svg>
      Autodesk Fusion 360
      <WindowButtons>
        <button aria-label="Minimize"><Svg size={8} box={8}><path stroke="#999" d="M1 4.500H8" /></Svg></button>
        <button aria-label="Restore"><Svg size={8} box={8}><path stroke="#888" d="M.5 2.500H5.500V7.500H.5ZM2.500 2V.5H7.500V5.500H6" /></Svg></button>
        <button aria-label="Close"><Svg size={8} box={8}><path stroke="#888" d="M1 1 7 7M7 1 1 7" /></Svg></button>
      </WindowButtons>
    </TitleBar>

    <TabBar>
      <QuickAccess>
        <QuickButton aria-label="Data panel">{bars.apps}</QuickButton>
        <QuickButton aria-label="File">{bars.file}<Caret /></QuickButton>
        <QuickButton aria-label="Save">{bars.save}</QuickButton>
        <QuickButton aria-label="Undo">{bars.undo}<Caret /></QuickButton>
        <QuickButton aria-label="Redo" disabled>{bars.redo}<Caret /></QuickButton>
      </QuickAccess>
      <DocumentTab>
        {bars.doc}
        Airbus - Moon Habitat v1*
        <button aria-label="Close tab"><Svg size={8} box={8}><path stroke="#555" d="M1 1 7 7M7 1 1 7" /></Svg></button>
      </DocumentTab>
      <AddTab aria-label="New tab"><Svg size={10} box={10}><path stroke="#777" strokeWidth="2" d="M5 0V10M0 5H10" /></Svg></AddTab>
      <Account>
        <button aria-label="Extensions">
          <Svg size={11} box={12}><circle cx="6" cy="6" r="5.500" fill="#444" /><path stroke="#ddd" strokeWidth="2" d="M3 9 7 5" /><circle cx="7.500" cy="4.500" r="2" fill="#ddd" /><path stroke="#444" d="M8 4 10 2" /></Svg>
        </button>
        <button aria-label="Job status">
          <Svg size={11} box={12}><circle cx="6" cy="6" r="4.700" fill="#bbb" stroke="#555" strokeWidth="1.500" /><circle cx="6" cy="6" r="3" fill="#555" /><path stroke="#eee" d="M6 3V6H9" /></Svg>
        </button>
        <span>Mike Warren ADSK</span>
        <button aria-label="Help">
          <Svg size={11} box={12}><circle cx="6" cy="6" r="5.500" fill="#444" /><path stroke="#fff" strokeWidth="1.300" d="M4 4.500C4 2 8 2 8 4.500 8 6 6 6 6 7.500M6 8.500V10" /></Svg>
        </button>
      </Account>
    </TabBar>

    <Toolbar>
      <DesignButton>DESIGN <Caret /></DesignButton>
      <Ribbon>
        <RibbonTabs>
          {['SOLID', 'SURFACE', 'SHEET METAL', 'TOOLS'].map((name, i) => (
            <RibbonTab key={name} $active={i === 0}>{name}</RibbonTab>
          ))}
        </RibbonTabs>
        <Groups>
          {toolGroups.map((group, i) => (
            <Group key={group.label} $first={i === 0} $pad={group.pad}>
              <Tools>
                {group.tools.map(name => (
                  <Tool key={name} aria-label={name} $active={name === 'select'}>{toolIcons[name]}</Tool>
                ))}
              </Tools>
              <GroupLabel $open={group.open}>{group.label} <Caret $light={group.open} /></GroupLabel>
              {group.open && <CreateMenu />}
            </Group>
          ))}
        </Groups>
      </Ribbon>
    </Toolbar>

    <Viewport>
      <Scene />
      <Side>
        <div>
          <PanelHead>
            <Svg size={7} box={8}><path fill="#222" d="M4 1V7L0 4ZM8 1V7L4 4Z" /></Svg>
            BROWSER
          </PanelHead>
          <Tree>
            {tree.map(row => (
              <TreeRow key={row.id} $level={row.level}>
                {!row.leaf && <Twist open={row.open} />}
                <TreeLabel>
                  {row.eye && <Eye dim={row.eye === 'off'} />}
                  {!row.root && treeIcons[row.icon]}
                  {!row.root && row.text}
                </TreeLabel>
                {row.root && <TreeLabel $root>{treeIcons[row.icon]}{row.text}</TreeLabel>}
              </TreeRow>
            ))}
          </Tree>
        </div>
        <CommentsHead>
          COMMENTS
          <Svg size={7} box={8}><circle cx="4" cy="4" r="3" fill="#444" /></Svg>
        </CommentsHead>
      </Side>

      <Cube3d />
      <Distance>
        <input aria-label="Distance" defaultValue="-30.00 mm" />
        <Caret />
      </Distance>
      <Hint role="tooltip">Select sketch profiles or planar faces to extrude</Hint>
      <NavBar aria-label="View controls">
        {navIcons.map(([name, drop, art]) => (
          <NavButton key={name} aria-label={name}>
            <Svg size={12} box={12}>{art}</Svg>
            {drop && <Caret />}
          </NavButton>
        ))}
      </NavBar>
      <Callouts />
    </Viewport>

    <Timeline>
      {playback.map(([name, d]) => (
        <button key={name} aria-label={name}><Svg size={10} box={10}><path fill="#333" d={d} /></Svg></button>
      ))}
      <History>
        <svg width="20" height="22" viewBox="0 0 20 22" fill="none">
          <path fill="#a98be0" stroke="#7b57bd" d="M1 8 3 5H9L11 7V12L9 15H1Z" />
          <path fill="#e0d3f8" stroke="#6b48ad" d="M3 8H8V13H3Z" />
          <path stroke="#aaa" d="M5.500 18V21" />
          <path fill="#4a4a4a" d="M9 1H18V4L15 7V22H13V7L9 4Z" />
        </svg>
      </History>
      <button aria-label="Timeline settings"><Gear size={12} /></button>
    </Timeline>
  </Shell>
)

export default App
